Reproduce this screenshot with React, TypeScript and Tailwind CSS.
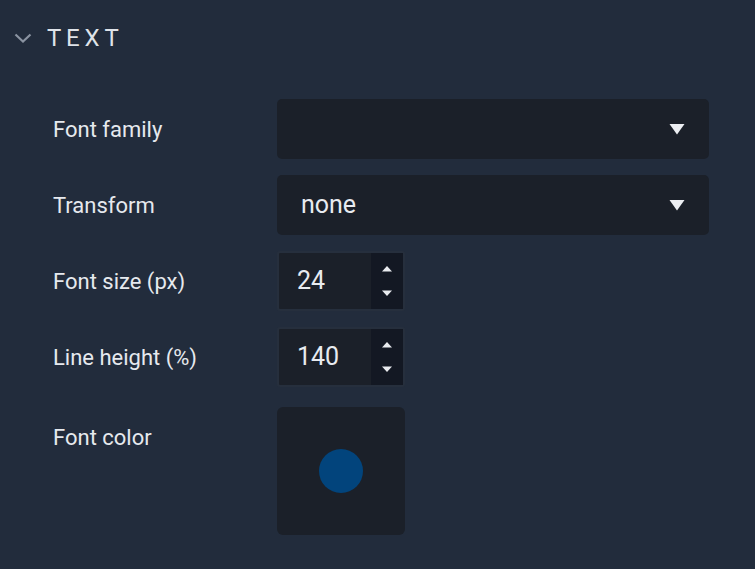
function Caret({ up }: { up?: boolean }) {
  return (
    <svg width="12" height="7" viewBox="0 0 12 7" className={up ? "" : "rotate-180"}>
      <path d="M1 6.5 L6 1 L11 6.5 Z" fill="#e9ebef" />
    </svg>
  );
}

function Select({ value }: { value?: string }) {
  return (
    <div className="flex h-[60px] w-[432px] items-center justify-between rounded-[5px] bg-[#1b2029] pl-[24px] pr-[24px]">
      <span className="text-[25px] text-[#e8ebf0]">{value ?? ""}</span>
      <svg width="16" height="12" viewBox="0 0 16 12">
        <path d="M0.5 1 H15.5 L8 11.5 Z" fill="#eceef2" />
      </svg>
    </div>
  );
}

function NumberInput({ value }: { value: string }) {
  return (
    <div className="flex h-[60px] w-[128px] rounded-[3px] border-2 border-[#262f3d] bg-[#1b2029]">
      <div className="flex flex-1 items-center pl-[18px] text-[25px] text-[#e8ebf0]">{value}</div>
      <div className="flex w-[32px] flex-col items-center justify-between bg-[#131823] py-[12px]">
        <Caret up />
        <Caret />
      </div>
    </div>
  );
}

function Row({ label, top, children }: { label: string; top?: boolean; children: React.ReactNode }) {
  return (
    <div className={`flex ${top ? "items-start" : "items-center"}`}>
      <div className={`w-[224px] text-[22px] text-[#e6e9ee] ${top ? "pt-[18px]" : ""}`}>{label}</div>
      {children}
    </div>
  );
}

export default function App() {
  return (
    <div
      className="h-[569px] w-[755px] overflow-hidden bg-[#222c3c]"
      style={{ fontFamily: "Roboto, 'Liberation Sans', sans-serif" }}
    >
      <div className="flex items-center pl-[14px] pt-[20px]">
        <svg width="18" height="10" viewBox="0 0 18 10">
          <path d="M1.5 1.5 L9 8.5 L16.5 1.5" fill="none" stroke="#8a93a1" strokeWidth="2.2" />
        </svg>
        <span className="ml-[15px] text-[24px] tracking-[0.2em] text-[#dfe3e9]">TEXT</span>
      </div>
      <div className="mt-[43px] flex flex-col gap-[16px] pl-[53px]">
        <Row label="Font family">
          <Select />
        </Row>
        <Row label="Transform">
          <Select value="none" />
        </Row>
        <Row label="Font size (px)">
          <NumberInput value="24" />
        </Row>
        <Row label="Line height (%)">
          <NumberInput value="140" />
        </Row>
        <Row label="Font color" top>
          <div className="mt-[4px] flex h-[128px] w-[128px] items-center justify-center rounded-[6px] bg-[#1b2029]">
            <div className="h-[44px] w-[44px] rounded-full bg-[#02447c]" />
          </div>
        </Row>
      </div>
    </div>
  );
}
